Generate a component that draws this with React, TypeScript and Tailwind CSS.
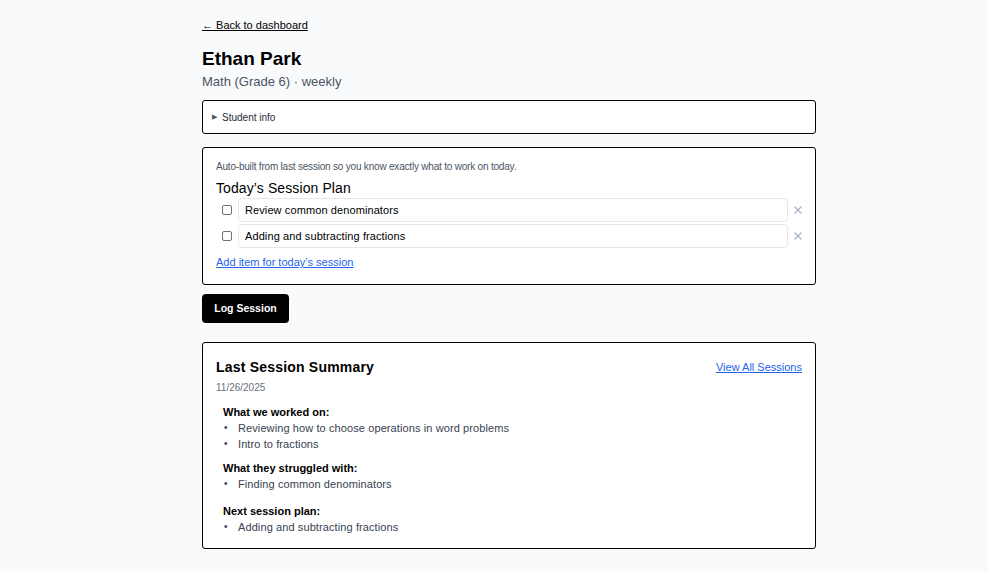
const worked = ["Reviewing how to choose operations in word problems", "Intro to fractions"];
const struggled = ["Finding common denominators"];
const next = ["Adding and subtracting fractions"];

function Section({ title, items, gap }: { title: string; items: string[]; gap: string }) {
    return (
        <div className={gap}>
            <div className="text-[11px] font-bold text-black leading-[14px]">{title}</div>
            <ul className="mt-[1px]">
                {items.map((t) => (
                    <li key={t} className="flex items-center text-[11px] text-[#374151] leading-[16px] tracking-[0.1px]">
                        <span className="w-[15px] pl-[1px] text-[10px] text-[#374151]">•</span>
                        {t}
                    </li>
                ))}
            </ul>
        </div>
    );
}

export default function App() {
    const plan = ["Review common denominators", "Adding and subtracting fractions"];
    return (
        <div className="min-h-screen bg-[#f9fafb] text-black" style={{ fontFamily: "'Liberation Sans', Arial, sans-serif" }}>
            <div className="pl-[202px] pt-[17px]">
                <div className="w-[614px]">
                    <a href="#" className="text-[11px] underline text-black leading-[16px] block">← Back to dashboard</a>

                    <h1 className="mt-[13px] text-[19px] font-bold leading-[26px]">Ethan Park</h1>
                    <div className="text-[13px] text-[#4b5563] leading-[20px]">Math (Grade 6) · weekly</div>

                    {/* student info */}
                    <div className="mt-[8px] h-[34px] bg-white border border-black rounded-[3px] flex items-center px-[9px]">
                        <span className="text-[7px] text-[#4b5563] mr-[5px]">▶</span>
                        <span className="text-[10px] text-[#1f2937]">Student info</span>
                    </div>

                    {/* session plan */}
                    <div className="mt-[13px] bg-white border border-black rounded-[3px] px-[13px] pt-[13px] pb-[15px]">
                        <div className="text-[10px] text-[#4b5563] leading-[12px] tracking-[-0.2px]">Auto-built from last session so you know exactly what to work on today.</div>
                        <div className="mt-[6px] text-[14px] leading-[18px] text-black tracking-[0.1px]">Today’s Session Plan</div>
                        <div className="mt-[1px] flex flex-col gap-[2px]">
                            {plan.map((p) => (
                                <div key={p} className="flex items-center">
                                    <div className="w-[22px] flex justify-end pr-[6px]">
                                        <span className="w-[10px] h-[10px] border border-[#6b7280] rounded-[2px] bg-white" />
                                    </div>
                                    <div className="flex-1 h-[24px] border border-[#e5e7eb] rounded-[4px] flex items-center px-[6px] text-[11px] text-black tracking-[0.1px]">
                                        {p}
                                    </div>
                                    <svg className="ml-[6px] w-[8px] h-[8px] shrink-0" viewBox="0 0 8 8" fill="none" stroke="#a3b0c8" strokeWidth="1.1">
                                        <path d="M0.5 0.5 L7.5 7.5 M7.5 0.5 L0.5 7.5" />
                                    </svg>
                                </div>
                            ))}
                        </div>
                        <a href="#" className="mt-[7px] block text-[11px] text-[#2563eb] underline leading-[14px]">Add item for today’s session</a>
                    </div>

                    <button className="mt-[9px] h-[29px] w-[87px] bg-black text-white text-[10.5px] font-bold rounded-[4px]">Log Session</button>

                    {/* last session */}
                    <div className="mt-[19px] bg-white border border-black rounded-[3px] px-[13px] pt-[14px] pb-[4px]">
                        <div className="flex items-center justify-between">
                            <div className="text-[14px] font-bold leading-[20px] tracking-[0.2px]">Last Session Summary</div>
                            <a href="#" className="text-[11px] text-[#2563eb] underline">View All Sessions</a>
                        </div>
                        <div className="mt-[5px] text-[10px] text-[#6b7280] leading-[12px]">11/26/2025</div>
                        <div className="mt-[11px] pl-[7px]">
                            <Section title="What we worked on:" items={worked} gap="mb-[9px]" />
                            <Section title="What they struggled with:" items={struggled} gap="mb-[12px]" />
                            <Section title="Next session plan:" items={next} gap="mb-[9px]" />
                        </div>
                    </div>
                </div>
            </div>
        </div>
    );
}
